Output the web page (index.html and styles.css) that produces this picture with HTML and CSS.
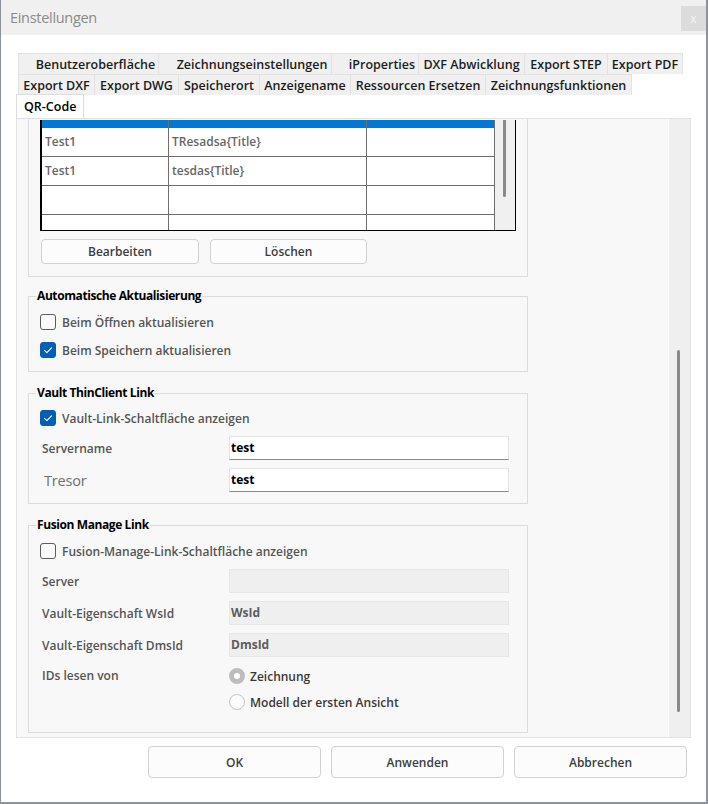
FILE: index.html
```html
<!DOCTYPE html>
<html lang="de">
<head>
<meta charset="utf-8">
<title>Einstellungen</title>
<link rel="stylesheet" href="styles.css">
</head>
<body>
<div class="window">
  <div class="titlebar">
    <span class="title">Einstellungen</span>
    <span class="close">x</span>
  </div>
  <div class="body">
    <div class="tabs">
      <div class="tabrow row1">
        <div class="tab shift">Benutzeroberfläche</div>
        <div class="tab shift">Zeichnungseinstellungen</div>
        <div class="tab shift">iProperties</div>
        <div class="tab">DXF Abwicklung</div>
        <div class="tab">Export STEP</div>
        <div class="tab">Export PDF</div>
      </div>
      <div class="tabrow row2">
        <div class="tab">Export DXF</div>
        <div class="tab">Export DWG</div>
        <div class="tab">Speicherort</div>
        <div class="tab">Anzeigename</div>
        <div class="tab">Ressourcen Ersetzen</div>
        <div class="tab">Zeichnungsfunktionen</div>
      </div>
      <div class="tabrow row3">
        <div class="tab active">QR-Code</div>
      </div>
    </div>

    <div class="panel">
      <div class="scrollarea">
        <div class="tablegroup">
          <div class="grid">
            <div class="cols">
              <div class="trow sel"><span></span><span></span><span></span></div>
              <div class="trow"><span>Test1</span><span>TResadsa{Title}</span><span></span></div>
              <div class="trow"><span>Test1</span><span>tesdas{Title}</span><span></span></div>
              <div class="trow"><span></span><span></span><span></span></div>
              <div class="trow"><span></span><span></span><span></span></div>
            </div>
            <div class="scrollcol"><div class="mini-thumb"></div></div>
          </div>
          <div class="tablebtns">
            <button class="btn btn-edit">Bearbeiten</button>
            <button class="btn btn-del">Löschen</button>
          </div>
        </div>

        <fieldset class="group g-auto">
          <legend>Automatische Aktualisierung</legend>
          <label class="check first"><span class="cb"></span>Beim Öffnen aktualisieren</label>
          <label class="check second"><span class="cb on"><svg viewBox="0 0 16 16" width="16" height="16"><path d="M4.5 8.3 L6.9 10.6 L11.5 5.8" fill="none" stroke="#fff" stroke-width="1.1" stroke-linecap="round" stroke-linejoin="round"/></svg></span>Beim Speichern aktualisieren</label>
        </fieldset>

        <fieldset class="group g-vault">
          <legend>Vault ThinClient Link</legend>
          <label class="check first"><span class="cb on"><svg viewBox="0 0 16 16" width="16" height="16"><path d="M4.5 8.3 L6.9 10.6 L11.5 5.8" fill="none" stroke="#fff" stroke-width="1.1" stroke-linecap="round" stroke-linejoin="round"/></svg></span>Vault-Link-Schaltfläche anzeigen</label>
          <div class="field f-first">
            <span class="flabel">Servername</span>
            <div class="input">test</div>
          </div>
          <div class="field">
            <span class="flabel plain">Tresor</span>
            <div class="input">test</div>
          </div>
        </fieldset>

        <fieldset class="group g-fusion">
          <legend>Fusion Manage Link</legend>
          <label class="check first"><span class="cb"></span>Fusion-Manage-Link-Schaltfläche anzeigen</label>
          <div class="field f-first">
            <span class="flabel">Server</span>
            <div class="input disabled"></div>
          </div>
          <div class="field">
            <span class="flabel">Vault-Eigenschaft WsId</span>
            <div class="input disabled">WsId</div>
          </div>
          <div class="field">
            <span class="flabel">Vault-Eigenschaft DmsId</span>
            <div class="input disabled">DmsId</div>
          </div>
          <div class="field radios">
            <span class="flabel">IDs lesen von</span>
            <div class="radiolist">
              <div class="radio"><span class="rb sel"></span>Zeichnung</div>
              <div class="radio second"><span class="rb"></span>Modell der ersten Ansicht</div>
            </div>
          </div>
        </fieldset>
      </div>
      <div class="vscroll"><div class="thumb"></div></div>
    </div>

    <div class="footer">
      <button class="btn fbtn">OK</button>
      <button class="btn fbtn">Anwenden</button>
      <button class="btn fbtn">Abbrechen</button>
    </div>
  </div>
</div>
</body>
</html>
```

FILE: styles.css
```css
* { box-sizing: border-box; }
html, body { margin: 0; padding: 0; }
body {
  width: 708px;
  height: 804px;
  overflow: hidden;
  background: #fff;
  font-family: "Open Sans", "Noto Sans", sans-serif;
  font-size: 12px;
  color: #555;
}
.window {
  width: 708px;
  height: 804px;
  border-left: 1px solid #8e939b;
  border-right: 2px solid #8e939b;
  border-bottom: 2px solid #8e939b;
  display: flex;
  flex-direction: column;
  background: #fff;
}
.titlebar {
  height: 35px;
  flex: none;
  background: #f0f0f0;
  display: flex;
  align-items: center;
  justify-content: space-between;
  padding-left: 9px;
}
.title {
  font-size: 14.5px;
  color: #8a8a8a;
  letter-spacing: -0.3px;
}
.close {
  width: 25px;
  height: 25px;
  margin-top: 1px;
  background: #dcdcdc;
  color: #f4f4f4;
  display: flex;
  align-items: center;
  justify-content: center;
  font-size: 12px;
}
.body {
  flex: 1;
  padding: 18px 15px 24px 15px;
  display: flex;
  flex-direction: column;
}

/* tabs */
.tabs { height: 65px; flex: none; }
.tabrow { display: grid; height: 21px; margin-left: 2px; }
.row1 { grid-template-columns: 141px 173px 87px 106px 83px 75px; }
.row2 { grid-template-columns: 77px 84px 81px 91px 135px 146px; }
.row3 { margin-left: 0; margin-top: -1px; height: 24px; grid-template-columns: 68px; }
.tab {
  background: #f0f0f0;
  border-top: 1px solid #e2e2e2;
  border-right: 1px solid #e2e2e2;
  display: flex;
  align-items: center;
  justify-content: center;
  font-weight: 600;
  font-size: 12.5px;
  color: #1c1c1c;
  white-space: nowrap;
}
.tab:first-child { border-left: 1px solid #e2e2e2; }
.tab.shift { padding-left: 14px; }
.tab.active {
  background: #fff;
  border: 1px solid #dcdcdc;
  border-bottom: none;
  justify-content: flex-start;
  padding-left: 7px;
  color: #000;
  position: relative;
  z-index: 1;
}

/* panel */
.panel {
  height: 620px;
  flex: none;
  border: 1px solid #e2e2e2;
  background: #f8f8f8;
  display: flex;
  overflow: hidden;
}
.scrollarea {
  flex: 1;
  padding: 0 0 0 11px;
  overflow: hidden;
}
.vscroll {
  width: 22px;
  flex: none;
  background: #efefef;
  border-left: 1px solid #fcfcfc;
  padding: 231px 0 0 8px;
}
.thumb {
  width: 3px;
  height: 362px;
  background: #8a8a8a;
  border-radius: 2px;
}

/* table group */
.tablegroup {
  width: 500px;
  border: 1px solid #dcdcdc;
  border-top: none;
  padding: 1px 11px 12px 11px;
}
.grid {
  height: 111px;
  border: 1px solid #000;
  border-left-width: 2px;
  border-top: none;
  display: flex;
  overflow: hidden;
  background: #fff;
}
.cols { width: 453px; flex: none; }
.trow {
  display: grid;
  grid-template-columns: 127px 198px 128px;
  height: 29px;
  border-bottom: 1px solid #6e6e6e;
}
.trow span {
  border-right: 1px solid #6e6e6e;
  padding-left: 3px;
  line-height: 28px;
  font-weight: 600;
  color: #666;
  white-space: nowrap;
}
.trow.sel { height: 8px; background: #0078d7; border-bottom: none; }
.scrollcol {
  width: 20px;
  flex: none;
  background: #f0f0f0;
  padding-left: 8px;
}
.mini-thumb {
  width: 3px;
  height: 77px;
  background: #8a8a8a;
  border-radius: 0 0 2px 2px;
}
.tablebtns {
  display: flex;
  gap: 11px;
  margin-top: 8px;
  padding-left: 1px;
}
.btn {
  font-family: "Open Sans", "Noto Sans", sans-serif;
  font-weight: 600;
  font-size: 12px;
  color: #3c3c3c;
  background: #fcfcfc;
  border: 1px solid #d2d2d2;
  border-radius: 4px;
  padding: 0;
}
.btn-edit { width: 158px; height: 25px; }
.btn-del { width: 157px; height: 25px; }

/* group boxes */
.group {
  width: 500px;
  margin: 0;
  border: 1px solid #dcdcdc;
  padding: 0 11px 0 11px;
  min-inline-size: 0;
}
.group legend {
  padding: 0 1px;
  margin-left: -4px;
  line-height: 18px;
  font-weight: 700;
  font-size: 12px;
  letter-spacing: -0.4px;
  color: #000;
}
.g-auto { margin-top: 10px; padding-bottom: 13px; }
.g-vault { margin-top: 12px; padding-bottom: 11px; }
.g-fusion { margin-top: 12px; padding-bottom: 22px; }

.check {
  display: flex;
  align-items: center;
  gap: 6px;
  height: 16px;
  font-weight: 600;
  color: #555;
  white-space: nowrap;
}
.check.first { margin-top: 9px; }
.g-vault .check.first { margin-top: 8px; }
.check.second { margin-top: 12px; }
.cb {
  width: 16px;
  height: 16px;
  flex: none;
  border: 1px solid #5c5c5c;
  border-radius: 3px;
  background: #fbfbfb;
  display: flex;
}
.cb svg { margin: -1px; }
.cb.on { background: #005fb8; border-color: #005fb8; }

.field {
  display: grid;
  grid-template-columns: 189px 280px;
  align-items: center;
  margin-top: 8px;
}
.field.f-first { margin-top: 10px; }
.flabel {
  padding-left: 2px;
  font-weight: 600;
  color: #555;
  white-space: nowrap;
}
.flabel.plain {
  padding-left: 4px;
  font-weight: 400;
  font-size: 14.5px;
  color: #6e6e6e;
  letter-spacing: -0.2px;
}
.input {
  height: 24px;
  background: #fff;
  border: 1px solid #e4e4e4;
  border-bottom-color: #8a8a8a;
  padding-left: 1px;
  line-height: 22px;
  font-weight: 700;
  color: #000;
}
.input.disabled {
  background: #efefef;
  border-color: #e6e6e6;
  color: #5c5c5c;
}
.field.radios { margin-top: 11px; align-items: start; }
.radios .flabel { line-height: 16px; }
.radio {
  display: flex;
  align-items: center;
  gap: 5px;
  height: 16px;
  font-weight: 600;
  color: #383838;
  white-space: nowrap;
}
.radio.second { margin-top: 10px; }
.rb {
  width: 16px;
  height: 16px;
  flex: none;
  border-radius: 50%;
  border: 1px solid #c6c6c6;
  background: #fcfcfc;
}
.rb.sel {
  border: 5px solid #bdbdbd;
  background: #fff;
}

/* footer */
.footer {
  display: flex;
  justify-content: flex-end;
  gap: 10px;
  margin-top: 8px;
  padding-right: 4px;
}
.fbtn { width: 173px; height: 32px; }
```
